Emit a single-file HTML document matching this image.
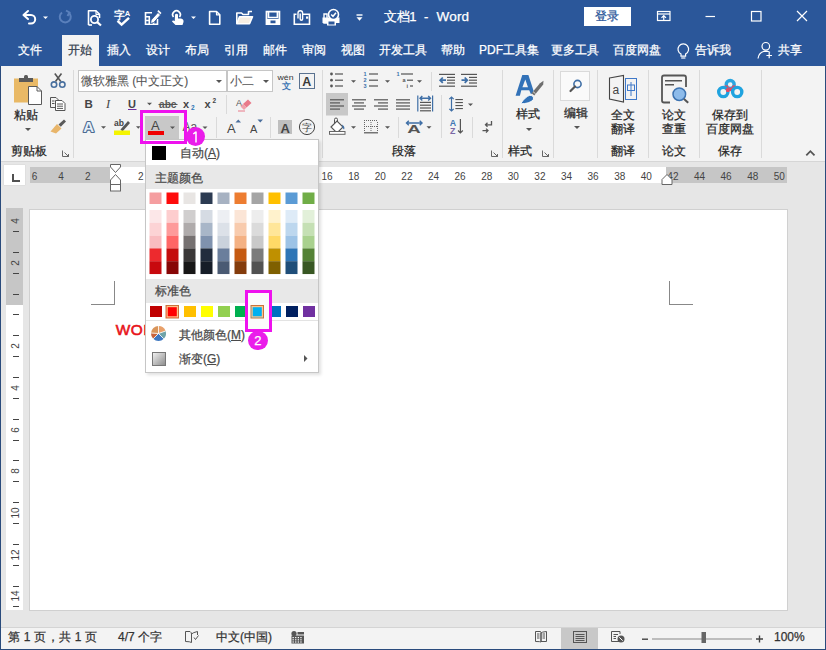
<!DOCTYPE html>
<html><head><meta charset="utf-8">
<style>
*{box-sizing:border-box}
html,body{margin:0;padding:0;width:826px;height:650px;overflow:hidden;background:#E6E6E6;font-family:"Liberation Sans",sans-serif;}
.a{position:absolute}
.t{position:absolute;white-space:nowrap;line-height:1;-webkit-text-stroke:0.25px currentColor}
#title{left:0;top:0;width:826px;height:35px;background:#2B579A}
#tabs{left:0;top:35px;width:826px;height:31px;background:#2B579A}
.tab{position:absolute;top:43px;color:#fff;font-size:12px;line-height:14px;white-space:nowrap;-webkit-text-stroke:0.25px currentColor}
#ribbon{left:0;top:66px;width:826px;height:96px;background:#F3F3F3;border-bottom:1px solid #D6D6D6}
.rt{position:absolute;color:#262626;font-size:12px;line-height:14px;white-space:nowrap;-webkit-text-stroke:0.25px currentColor}
.sep{position:absolute;width:1px;background:#DADADA}
.dd{position:absolute;width:0;height:0;border-left:3px solid transparent;border-right:3px solid transparent;border-top:3px solid #555}
</style></head><body>
<div id="title" class="a"></div>
<svg class="a" style="left:0;top:0" width="826" height="35" viewBox="0 0 826 35">
<g fill="none" stroke="#fff" stroke-width="2" stroke-linejoin="round" stroke-linecap="round">
<path d="M28 11 L23.5 15 L28 19" />
<path d="M24 15 H31 A4.2 4.2 0 0 1 31 23.4 H29" />
</g>
<path d="M43 16.5 H48 L45.5 19 Z" fill="#fff"/>
<g fill="none" stroke="#5A80BC" stroke-width="2">
<path d="M68.5 12.5 A5.5 5.5 0 1 1 62 12.5" />
<path d="M66 10.5 L69.5 12.5 L67.5 16" />
</g>
<g fill="none" stroke="#fff" stroke-width="1.6" stroke-linejoin="round">
<path d="M88.5 25 V10.8 H96 L99.5 14.3 V18" />
<path d="M96 10.8 V14.3 H99.5" stroke-width="1.2"/>
<circle cx="94.5" cy="19.5" r="3.6" stroke-width="1.8"/>
<path d="M97.2 22.2 L101 25.5" stroke-width="2.2"/>
<path d="M88.5 25 H92" />
</g>
<text x="114" y="19" fill="#fff" font-size="10.5" font-weight="bold">字</text>
<text x="124.8" y="16.3" fill="#fff" font-size="7.5" font-weight="bold" font-family="Liberation Sans">A</text>
<path d="M117.5 20.8 L121.6 24.6 L129 17.8" fill="none" stroke="#fff" stroke-width="2.4" stroke-linejoin="miter"/>
<g fill="none" stroke="#fff" stroke-width="1.6">
<path d="M152 12.8 H145.5 V24.2 H157.5 V19" />
<path d="M145.5 16.8 H150 M149.3 16.8 V24.2 M145.5 20.5 H149.3 M153.5 24.2 V22" />
</g>
<path d="M150.5 23.5 L151.2 20 L158 12.5 L160.5 15 L153.8 22.5 Z" fill="#fff" stroke="#2B579A" stroke-width="0.8"/>
<path d="M157.3 11.2 L158.5 10 L161.5 13 L160.3 14.2 Z" fill="#fff"/>
<g fill="none" stroke="#fff" stroke-width="1.7">
<path d="M173.5 17 A3.8 3.8 0 1 1 179.5 17" />
</g>
<path d="M175 14.5 Q176.5 13 178 14.5 V18.5 H181 Q184 19 183.5 22 L182.5 25 H175.5 L172 21.5 Q172.5 20 174.8 21 Z" fill="#fff"/>
<path d="M191 16.5 H196 L193.5 19 Z" fill="#fff"/>
<g fill="none" stroke="#fff" stroke-width="1.6" stroke-linejoin="round">
<path d="M209.6 11.5 H216.5 L219.8 14.8 V24.3 H209.6 Z" />
<path d="M216.5 11.5 V14.8 H219.8" stroke-width="1.2"/>
</g>
<g stroke="#fff" stroke-width="1.6" stroke-linejoin="round">
<path d="M236.8 23.8 V13 H241.5 L243 14.5 H248.5 V11.5 H252" fill="none"/>
<path d="M236.8 23.8 L239.5 16.8 H252.5 L249.5 23.8 Z" fill="#F6EEE3"/>
</g>
<g fill="none" stroke="#fff" stroke-width="1.8">
<path d="M266.5 11.6 H279.4 V24.2 H266.5 Z" />
<path d="M268.5 11.6 V17.5 H277.4 V11.6" stroke-width="1.6"/>
</g>
<path d="M266 19 H280 V25 H266 Z M270.5 20.5 V24.6 H275.5 V20.5 Z" fill="#fff" fill-rule="evenodd"/>
<g fill="none" stroke="#fff" stroke-width="1.6">
<path d="M296.5 14.3 H294.3 V24.2 H309.5 V14.3 H302.5" />
<path d="M298 18.5 V13 A2.3 2.3 0 0 1 302.6 13 V19 A1.2 1.2 0 0 1 300.2 19 V13.5" stroke-width="1.4"/>
</g>
<rect x="306" y="16.5" width="2.2" height="2.2" fill="#fff"/>
<g>
<path d="M324 14 H327 V23 H324 Z" fill="none" stroke="#fff" stroke-width="1.4"/>
<path d="M322.5 17.5 H339.5 V23 H336 V25.5 H327 V23 H322.5 Z" fill="#fff"/>
<rect x="328.5" y="21.5" width="6" height="3" fill="#2B579A"/>
<circle cx="333.5" cy="14.5" r="5" fill="#2B579A" stroke="#fff" stroke-width="1.6"/>
<path d="M331.2 14.5 L333 16.3 L336 12.8" fill="none" stroke="#fff" stroke-width="1.5"/>
</g>
<rect x="356.5" y="14.3" width="6" height="1.4" fill="#fff"/>
<path d="M356.5 17.3 H362.5 L359.5 20.8 Z" fill="#fff"/>
</svg>
<div id="tabs" class="a"></div>
<div class="t" style="left:384px;top:9px;color:#fff;font-size:13px;line-height:15px;letter-spacing:-0.4px">文档1</div>
<div class="t" style="left:424px;top:9px;color:#fff;font-size:13px;line-height:15px">-</div>
<div class="t" style="left:436.5px;top:9px;color:#fff;font-size:13.5px;line-height:15px;letter-spacing:0.2px">Word</div>
<div class="a" style="left:584px;top:7px;width:47px;height:19px;background:#fff"></div>
<div class="t" style="left:595px;top:9px;color:#2B579A;font-size:12px;line-height:14px">登录</div>
<svg class="a" style="left:640px;top:0" width="186" height="35" viewBox="640 0 186 35">
<g fill="none" stroke="#fff" stroke-width="1.2">
<rect x="657.5" y="11.5" width="12.5" height="9"/>
<path d="M657.5 14 H670"/>
<path d="M663.75 20.5 V15.5 M661.5 17.8 L663.75 15.5 L666 17.8"/>
<path d="M705.5 16.5 H715"/>
<rect x="751.5" y="11.5" width="9.5" height="9.5"/>
<path d="M797 11 L807 21 M807 11 L797 21"/>
</g>
</svg>
<div class="tab" style="left:18px">文件</div>
<div class="a" style="left:62px;top:35px;width:37px;height:31px;background:#F3F3F3"></div>
<div class="tab" style="left:68px;color:#34404F">开始</div>
<div class="tab" style="left:107px">插入</div>
<div class="tab" style="left:146px">设计</div>
<div class="tab" style="left:185px">布局</div>
<div class="tab" style="left:224px">引用</div>
<div class="tab" style="left:263px">邮件</div>
<div class="tab" style="left:302px">审阅</div>
<div class="tab" style="left:341px">视图</div>
<div class="tab" style="left:379px">开发工具</div>
<div class="tab" style="left:441px">帮助</div>
<div class="tab" style="left:479px">PDF工具集</div>
<div class="tab" style="left:551px">更多工具</div>
<div class="tab" style="left:613px">百度网盘</div>
<div class="tab" style="left:695px">告诉我</div>
<div class="tab" style="left:778px">共享</div>
<svg class="a" style="left:670px;top:35px" width="140" height="31" viewBox="670 35 140 31">
<g fill="none" stroke="#fff" stroke-width="1.2">
<path d="M681 54 A5.3 5.3 0 1 1 685.6 54 V56.2 H681 Z" />
<path d="M681.2 58 H685.4"/>
<circle cx="765.8" cy="46.3" r="3.8"/>
<path d="M758 58.5 Q759 51.5 765.8 51.2 Q768.5 51.3 770 52.5"/>
<path d="M769.2 52.8 V58.3 M766.4 55.5 H772"/>
</g>
</svg>
<div id="ribbon" class="a"></div>
<div class="sep" style="left:73px;top:70px;height:88px"></div>
<div class="sep" style="left:322px;top:70px;height:88px"></div>
<div class="sep" style="left:502px;top:70px;height:88px"></div>
<div class="sep" style="left:553px;top:70px;height:88px"></div>
<div class="sep" style="left:597px;top:70px;height:88px"></div>
<div class="sep" style="left:648px;top:70px;height:88px"></div>
<div class="sep" style="left:699px;top:70px;height:88px"></div>
<div class="sep" style="left:761px;top:70px;height:88px"></div>
<div class="sep" style="left:431px;top:72px;height:19px"></div>
<div class="sep" style="left:441px;top:95px;height:43px"></div>
<div class="sep" style="left:398px;top:117px;height:21px"></div>
<div class="sep" style="left:472px;top:117px;height:21px"></div>
<div class="sep" style="left:226px;top:95px;height:19px"></div>
<div class="sep" style="left:216px;top:117px;height:21px"></div>
<div class="sep" style="left:270px;top:117px;height:21px"></div>
<div class="a" style="left:78px;top:70px;width:149px;height:22px;background:#fff;border:1px solid #C6C6C6"></div>
<div class="a" style="left:227px;top:70px;width:46px;height:22px;background:#fff;border:1px solid #C6C6C6"></div>
<div class="rt" style="left:81px;top:74px;color:#555;-webkit-text-stroke:0.1px #555">微软雅黑 (中文正文)</div>
<div class="rt" style="left:230px;top:74px;color:#555;-webkit-text-stroke:0.1px #555">小二</div>
<div class="dd" style="left:216px;top:80px"></div>
<div class="dd" style="left:263px;top:80px"></div>
<div class="rt" style="left:14px;top:108px">粘贴</div>
<div class="dd" style="left:25px;top:128px"></div>
<div class="rt" style="left:11px;top:144px">剪贴板</div>
<div class="rt" style="left:392px;top:144px">段落</div>
<div class="rt" style="left:508px;top:144px">样式</div>
<div class="rt" style="left:516px;top:107px">样式</div>
<div class="dd" style="left:526px;top:128px"></div>
<div class="rt" style="left:564px;top:106px">编辑</div>
<div class="dd" style="left:574px;top:126px"></div>
<div class="rt" style="left:611px;top:108px">全文</div>
<div class="rt" style="left:611px;top:122px">翻译</div>
<div class="rt" style="left:611px;top:144px">翻译</div>
<div class="rt" style="left:662px;top:108px">论文</div>
<div class="rt" style="left:662px;top:122px">查重</div>
<div class="rt" style="left:662px;top:144px">论文</div>
<div class="rt" style="left:712px;top:108px">保存到</div>
<div class="rt" style="left:706px;top:122px">百度网盘</div>
<div class="rt" style="left:718px;top:144px">保存</div>

<svg class="a" style="left:0;top:66px" width="826" height="95" viewBox="0 66 826 95">
<!-- paste -->
<rect x="14" y="78.5" width="24" height="24" fill="#E9B966"/>
<rect x="19" y="78" width="14" height="4" fill="#5A5A5A"/>
<rect x="24" y="75" width="4" height="4" rx="1.5" fill="#5A5A5A"/>
<path d="M28.5 86.5 H37 L41.5 91 V104.5 H28.5 Z" fill="#fff" stroke="#5A5A5A" stroke-width="1"/>
<path d="M37 86.5 V91 H41.5" fill="none" stroke="#5A5A5A" stroke-width="1"/>
<!-- scissors -->
<g fill="none" stroke-width="1.6">
<path d="M55.5 81.5 L61.5 73.5 M60.8 81.5 L54.8 73.5" stroke="#555"/>
<circle cx="54" cy="84.6" r="2.7" stroke="#49709F"/>
<circle cx="62.3" cy="84.6" r="2.7" stroke="#49709F"/>
</g>
<!-- copy -->
<g fill="#F3F3F3" stroke="#555" stroke-width="1">
<path d="M50.5 97.5 H56 L58.5 100 V107.5 H50.5 Z"/>
<path d="M55.5 100.5 H62 L65 103.5 V110.5 H55.5 Z" fill="#fff"/>
<path d="M52 101 H54.5 M52 103.5 H54.5 M57 104 H63 M57 106.2 H63 M57 108.4 H63" fill="none"/>
</g>
<!-- format painter -->
<path d="M58.5 124.5 L64 119.5 L66 121.5 L60.8 126.8 Z" fill="#5A5A5A"/>
<path d="M57 124 L61.5 128.5 L56 133.5 L50.5 131.5 Z" fill="#E8B56A"/>
<!-- B I U -->
<text x="84.5" y="107.6" font-family="Liberation Sans" font-weight="bold" font-size="11.5" fill="#444">B</text>
<text x="106" y="107.6" font-family="Liberation Serif" font-style="italic" font-size="12.5" fill="#444">I</text>
<text x="128" y="107.6" font-family="Liberation Sans" font-weight="bold" font-size="11" fill="#444">U</text>
<rect x="128" y="109" width="8.5" height="1" fill="#7030A0"/>
<path d="M147 102.8 H152 L149.5 105.3 Z" fill="#555"/>
<text x="159" y="107.6" font-family="Liberation Sans" font-weight="bold" font-size="10" fill="#5A5A5A" textLength="17.5" lengthAdjust="spacingAndGlyphs">abc</text>
<rect x="158.5" y="104" width="19" height="1" fill="#555"/>
<text x="183" y="107.6" font-family="Liberation Sans" font-weight="bold" font-size="11" fill="#444">x</text>
<text x="191" y="110" font-family="Liberation Sans" font-weight="bold" font-size="6.5" fill="#2E75B6">2</text>
<text x="204.5" y="107.6" font-family="Liberation Sans" font-weight="bold" font-size="11" fill="#444">x</text>
<text x="212.5" y="102.5" font-family="Liberation Sans" font-weight="bold" font-size="6.5" fill="#444">2</text>
<!-- eraser -->
<text x="236" y="106" font-family="Liberation Sans" font-size="9" fill="#555">A</text>
<path d="M243 104 L248 99.5 L251.5 103 L246.5 107.5 Z" fill="#E97A8A"/>
<path d="M240.5 106.5 L243 104 L246.5 107.5 L244 110 Z" fill="#F0A0AA"/>
<path d="M238 111 H245" stroke="#E97A8A" stroke-width="1"/>
<!-- wen -->
<text x="277.5" y="79.8" font-family="Liberation Sans" font-size="8" fill="#333" textLength="16" lengthAdjust="spacingAndGlyphs">wén</text>
<text x="281.5" y="88.8" font-size="8.5" font-weight="bold" fill="#3F78B5">文</text>
<rect x="299.5" y="73.5" width="15" height="15" fill="none" stroke="#5A7290" stroke-width="1"/>
<text x="302.3" y="86.3" font-family="Liberation Sans" font-weight="bold" font-size="12.5" fill="#3A3A3A">A</text>
<!-- text effect A -->
<text x="83.3" y="132.3" font-family="Liberation Sans" font-weight="bold" font-size="15" fill="#E6F0FA" stroke="#4C6A90" stroke-width="2.2" paint-order="stroke" stroke-linejoin="round">A</text>
<path d="M101 126.3 H106 L103.5 128.8 Z" fill="#555"/>
<!-- highlighter -->
<text x="114" y="125.8" font-family="Liberation Sans" font-weight="bold" font-size="8.5" fill="#444">ab</text>
<path d="M120.5 129.5 L128 121 L130 123 L122.5 131.5 Z" fill="#555"/>
<rect x="114" y="130.5" width="16" height="4.5" fill="#F4F400"/>
<path d="M136 126.3 H140.5 L138.3 128.8 Z" fill="#555"/>
<!-- font color -->
<rect x="145" y="116" width="34" height="23.5" fill="#C8C8C8"/>
<text x="151" y="129.5" font-family="Liberation Sans" font-size="13" fill="#444">A</text>
<rect x="148" y="131" width="16" height="4" fill="#F00000"/>
<path d="M170 126.5 H175 L172.5 129 Z" fill="#555"/>
<!-- Aa -->
<text x="182.5" y="131" font-family="Liberation Sans" font-size="12" fill="#555">Aa</text>
<path d="M202.5 126.5 H207.5 L205 129 Z" fill="#555"/>
<!-- grow/shrink -->
<text x="227" y="133" font-family="Liberation Sans" font-size="13" fill="#444">A</text>
<path d="M235.5 122.5 H241 L238.3 119.5 Z" fill="#4A6E9C"/>
<text x="250" y="133" font-family="Liberation Sans" font-size="11" fill="#444">A</text>
<path d="M257.5 119.5 H263 L260.3 122.5 Z" fill="#4A6E9C"/>
<!-- shaded A -->
<rect x="278" y="120" width="14" height="14" fill="#BFBFBF"/>
<text x="280.5" y="132.5" font-family="Liberation Sans" font-weight="bold" font-size="13" fill="#444">A</text>
<circle cx="307" cy="127" r="7.6" fill="none" stroke="#444" stroke-width="1"/>
<text x="302" y="131.3" font-size="9.5" fill="#444">字</text>
</svg>
<svg class="a" style="left:0;top:66px" width="826" height="95" viewBox="0 66 826 95">
<!-- bullets -->
<g fill="#555">
<circle cx="331.5" cy="74" r="1.4"/><circle cx="331.5" cy="80.2" r="1.4"/><circle cx="331.5" cy="86" r="1.4"/>
<rect x="335" y="73.4" width="8" height="1.2"/><rect x="335" y="79.6" width="8" height="1.2"/><rect x="335" y="85.4" width="8" height="1.2"/>
<path d="M351 80.3 H356 L353.5 82.8 Z"/>
<rect x="369" y="73.4" width="9" height="1.2"/><rect x="369" y="79.6" width="9" height="1.2"/><rect x="369" y="85.4" width="9" height="1.2"/>
<path d="M385 80.3 H390 L387.5 82.8 Z"/>
<rect x="401" y="73.4" width="12" height="1.2"/><rect x="407" y="79.6" width="6" height="1.2"/><rect x="410" y="85.4" width="3" height="1.2"/>
<path d="M417 80.3 H422 L419.5 82.8 Z"/>
</g>
<g font-family="Liberation Sans" font-weight="bold" font-size="5.5" fill="#3C70AA">
<text x="363.5" y="76.2">1</text><text x="363.5" y="82.4">2</text><text x="363.5" y="88.2">3</text>
<text x="396.5" y="76.2">1</text><text x="402.5" y="82.4" fill="#555">a</text><text x="406.5" y="88.2" fill="#555">i</text>
</g>
<!-- indents -->
<g fill="#555">
<rect x="439" y="73.8" width="16" height="1.2"/><rect x="447" y="76.8" width="8" height="1.2"/><rect x="447" y="79.6" width="8" height="1.2"/><rect x="447" y="82.4" width="8" height="1.2"/><rect x="439" y="85.6" width="16" height="1.2"/>
<rect x="461" y="73.8" width="16" height="1.2"/><rect x="469" y="76.8" width="8" height="1.2"/><rect x="469" y="79.6" width="8" height="1.2"/><rect x="469" y="82.4" width="8" height="1.2"/><rect x="461" y="85.6" width="16" height="1.2"/>
</g>
<g fill="none" stroke="#3F6FA6" stroke-width="1.8">
<path d="M440 80.2 H446 M442.8 77.5 L440.2 80.2 L442.8 82.9"/>
<path d="M461.5 80.2 H467.5 M464.7 77.5 L467.3 80.2 L464.7 82.9"/>
</g>
<!-- align -->
<rect x="326" y="93" width="22" height="22.5" fill="#C8C8C8"/>
<g fill="#555">
<rect x="330" y="99.2" width="14" height="1.2"/><rect x="330" y="102.3" width="10" height="1.2"/><rect x="330" y="105.4" width="14" height="1.2"/><rect x="330" y="108.5" width="10" height="1.2"/>
<rect x="352" y="99.2" width="14" height="1.2"/><rect x="354" y="102.3" width="10" height="1.2"/><rect x="352" y="105.4" width="14" height="1.2"/><rect x="354" y="108.5" width="10" height="1.2"/>
<rect x="374" y="99.2" width="14" height="1.2"/><rect x="378" y="102.3" width="10" height="1.2"/><rect x="374" y="105.4" width="14" height="1.2"/><rect x="378" y="108.5" width="10" height="1.2"/>
<rect x="396" y="99.2" width="14" height="1.2"/><rect x="396" y="102.3" width="14" height="1.2"/><rect x="396" y="105.4" width="14" height="1.2"/><rect x="396" y="108.5" width="14" height="1.2"/>
<rect x="420" y="101.8" width="11" height="1.2"/><rect x="420" y="104.6" width="11" height="1.2"/><rect x="420" y="107.4" width="11" height="1.2"/><rect x="420" y="110.2" width="11" height="1.2"/>
</g>
<g fill="none" stroke="#3F6FA6" stroke-width="1.2">
<path d="M417.8 95.5 V111.5 M432.6 95.5 V111.5"/>
<path d="M420 98.3 H430.5 M422.3 96 L420 98.3 L422.3 100.6 M428.2 96 L430.5 98.3 L428.2 100.6" stroke-width="1.4"/>
</g>
<!-- line spacing -->
<g fill="#555">
<rect x="455.4" y="99" width="7.5" height="1.1"/><rect x="455.4" y="102" width="7.5" height="1.1"/><rect x="455.4" y="105" width="7.5" height="1.1"/><rect x="455.4" y="108" width="7.5" height="1.1"/>
<path d="M468 103.4 H473 L470.5 105.9 Z"/>
</g>
<g fill="none" stroke="#3F6FA6" stroke-width="1.2">
<path d="M451.5 97 V111 M449.3 99.2 L451.5 97 L453.7 99.2 M449.3 108.8 L451.5 111 L453.7 108.8"/>
</g>
<!-- sort -->
<text x="449.8" y="125.6" font-family="Liberation Sans" font-weight="bold" font-size="8.8" fill="#3F78B5">A</text>
<text x="450" y="133.8" font-family="Liberation Sans" font-weight="bold" font-size="8.8" fill="#7A68A6">Z</text>
<path d="M460.4 119 V133 M458 130.5 L460.4 133 L462.8 130.5" fill="none" stroke="#555" stroke-width="1.2"/>
<!-- show marks -->
<g fill="none" stroke="#555" stroke-width="1.3">
<path d="M491.5 121 V124.8 H485.5 M487.5 122.8 L485.5 124.8 L487.5 126.8"/>
<path d="M482.5 130.6 H488 M486 128.6 L488 130.6 L486 132.6"/>
</g>
<!-- shading -->
<g>
<path d="M331 127 L337 121 L343 127 L337 133 Z" fill="#fff" stroke="#555" stroke-width="1.1"/>
<path d="M334.5 123.5 V119.5 A1.5 1.5 0 0 1 337.5 119.5 V122" fill="none" stroke="#555" stroke-width="1"/>
<path d="M342 124.5 Q345.5 127 344 129.5 Q342 128 342 124.5 Z" fill="#3F6FA6"/>
<rect x="329.5" y="131.5" width="15.5" height="2.8" fill="#fff" stroke="#666" stroke-width="1"/>
<path d="M351 126.3 H356 L353.5 128.8 Z" fill="#555"/>
</g>
<!-- borders -->
<g fill="#666"><rect x="364" y="120" width="1" height="1"/><rect x="366" y="120" width="1" height="1"/><rect x="368" y="120" width="1" height="1"/><rect x="370" y="120" width="1" height="1"/><rect x="372" y="120" width="1" height="1"/><rect x="374" y="120" width="1" height="1"/><rect x="376" y="120" width="1" height="1"/><rect x="364" y="126" width="1" height="1"/><rect x="366" y="126" width="1" height="1"/><rect x="368" y="126" width="1" height="1"/><rect x="370" y="126" width="1" height="1"/><rect x="372" y="126" width="1" height="1"/><rect x="374" y="126" width="1" height="1"/><rect x="376" y="126" width="1" height="1"/><rect x="364" y="122" width="1" height="1"/><rect x="364" y="124" width="1" height="1"/><rect x="364" y="126" width="1" height="1"/><rect x="364" y="128" width="1" height="1"/><rect x="364" y="130" width="1" height="1"/><rect x="370.5" y="122" width="1" height="1"/><rect x="370.5" y="124" width="1" height="1"/><rect x="370.5" y="126" width="1" height="1"/><rect x="370.5" y="128" width="1" height="1"/><rect x="370.5" y="130" width="1" height="1"/><rect x="377" y="122" width="1" height="1"/><rect x="377" y="124" width="1" height="1"/><rect x="377" y="126" width="1" height="1"/><rect x="377" y="128" width="1" height="1"/><rect x="377" y="130" width="1" height="1"/></g>
<rect x="364" y="132.2" width="14" height="1.2" fill="#555"/>
<path d="M385 126.3 H390 L387.5 128.8 Z" fill="#555"/>
<!-- char scale -->
<g fill="none" stroke="#3F6FA6" stroke-width="1.4">
<path d="M406.5 123 H422 M408.8 120.8 L406.5 123 L408.8 125.2 M419.7 120.8 L422 123 L419.7 125.2"/>
</g>
<text x="407.3" y="133.2" font-family="Liberation Sans" font-weight="bold" font-size="10" fill="#555" textLength="13.5" lengthAdjust="spacingAndGlyphs">A</text>
<path d="M426.5 126.3 H431.5 L429 128.8 Z" fill="#555"/>
<!-- styles -->
<path d="M522.3 75 H528.4 L533.8 91.5 L531 94.2 L529.2 90.2 H521.3 L519.9 95.8 H515.6 Z M525.3 79.6 L522.4 87.2 H528 Z" fill="#3272B8" fill-rule="evenodd"/>
<path d="M531.5 93.3 L540 83.2 L543.5 80.8 L543.2 84.5 L534.3 95.5 Z" fill="#6E6E6E"/>
<path d="M533 91.6 L535.6 93.8" stroke="#F3F3F3" stroke-width="0.8"/>
<path d="M520.5 103.8 Q525.5 96.5 529.8 95.3 Q534.5 95.5 533.3 99.8 Q529.5 103.8 520.5 103.8 Z" fill="#3272B8" stroke="#fff" stroke-width="0.9"/>
<!-- launchers -->
<g fill="none" stroke="#666" stroke-width="1">
<path d="M62.5 150.5 V156.5 H68.5 M64.5 152.5 L68.5 156.5 M66 156.5 H68.5 V154"/>
<path d="M491.5 150.5 V156.5 H497.5 M493.5 152.5 L497.5 156.5 M495 156.5 H497.5 V154"/>
<path d="M542.5 150.5 V156.5 H548.5 M544.5 152.5 L548.5 156.5 M546 156.5 H548.5 V154"/>
</g>
<!-- editing -->
<rect x="560.5" y="71.5" width="29" height="29" fill="#FAFAFA" stroke="#DADADA" stroke-width="1"/>
<circle cx="577.5" cy="84" r="3.6" fill="none" stroke="#3F6FA6" stroke-width="1.6"/>
<path d="M575 86.5 L570.5 91" stroke="#555" stroke-width="2.2" stroke-linecap="round"/>
<!-- translate -->
<path d="M609.5 78 L623.5 75.5 V102 L609.5 99 Z" fill="none" stroke="#444" stroke-width="1.1"/>
<text x="612.5" y="94" font-family="Liberation Sans" font-size="12" fill="#444">a</text>
<rect x="625.5" y="78.5" width="11" height="21" fill="none" stroke="#3F78C8" stroke-width="1"/>
<rect x="627.5" y="85" width="7" height="5.5" fill="none" stroke="#3F78C8" stroke-width="1"/>
<path d="M631 82 V96" stroke="#3F78C8" stroke-width="1"/>
<!-- paper check -->
<path d="M670 102.5 H664 Q662 102.5 662 100.5 V77.5 Q662 75.5 664 75.5 H684 Q686 75.5 686 77.5 V87" fill="none" stroke="#555" stroke-width="1.8"/>
<rect x="665" y="80" width="17" height="1.5" fill="#555"/><rect x="665" y="84" width="9" height="1.5" fill="#555"/>
<circle cx="679.3" cy="94.2" r="6.3" fill="#8DBBEA" stroke="#3C72B0" stroke-width="1.5"/>
<path d="M684 99 L688.2 102.8" stroke="#555" stroke-width="2"/>
<!-- baidu -->
<g fill="none" stroke-width="3.4">
<circle cx="730.2" cy="84.5" r="4" stroke="#2AA6E0"/>
<path d="M726.2 85.5 A4 4 0 0 0 734.2 85.5" stroke="#E8475F"/>
<circle cx="723.3" cy="92" r="4.6" stroke="#1FA3DF"/>
<circle cx="737.2" cy="92" r="4.6" stroke="#1FA3DF"/>
<path d="M726.5 88.5 A4.6 4.6 0 0 1 727.9 92" stroke="#E8475F" stroke-width="3"/>
</g>
<!-- collapse -->
<path d="M806.3 155.3 L810.4 151.2 L814.5 155.3" fill="none" stroke="#555" stroke-width="1.8"/>
</svg>
<style>
.rn{top:171px;width:30px;text-align:center;font-size:10px;line-height:11px;color:#444;-webkit-text-stroke:0}
.vn{position:absolute;left:6px;width:30px;height:30px;font-size:10px;line-height:30px;text-align:center;color:#444;transform:rotate(-90deg);transform-origin:15px 15px;left:1px}
</style>
<!-- ruler -->
<div class="a" style="left:4px;top:165px;width:21px;height:20px;background:#fff;box-shadow:0 0 1px #BBB"></div>
<svg class="a" style="left:4px;top:165px" width="21" height="20"><path d="M9 9 V16 H16" fill="none" stroke="#505050" stroke-width="2"/></svg>
<div class="a" style="left:30px;top:167px;width:757px;height:16px;background:#fff"></div>
<div class="a" style="left:30px;top:167px;width:80px;height:16px;background:#C6C6C6"></div>
<div class="a" style="left:666px;top:167px;width:121px;height:16px;background:#C6C6C6"></div>
<div class="t rn" style="left:19.5px">6</div>
<div class="t rn" style="left:46.1px">4</div>
<div class="t rn" style="left:72.7px">2</div>
<div class="t rn" style="left:125.9px">2</div>
<div class="t rn" style="left:152.5px">4</div>
<div class="t rn" style="left:179.1px">6</div>
<div class="t rn" style="left:205.7px">8</div>
<div class="t rn" style="left:232.3px">10</div>
<div class="t rn" style="left:258.9px">12</div>
<div class="t rn" style="left:285.5px">14</div>
<div class="t rn" style="left:312.1px">16</div>
<div class="t rn" style="left:338.7px">18</div>
<div class="t rn" style="left:365.3px">20</div>
<div class="t rn" style="left:391.9px">22</div>
<div class="t rn" style="left:418.5px">24</div>
<div class="t rn" style="left:445.1px">26</div>
<div class="t rn" style="left:471.7px">28</div>
<div class="t rn" style="left:498.3px">30</div>
<div class="t rn" style="left:524.9px">32</div>
<div class="t rn" style="left:551.5px">34</div>
<div class="t rn" style="left:578.1px">36</div>
<div class="t rn" style="left:604.7px">38</div>
<div class="t rn" style="left:631.3px">40</div>
<div class="t rn" style="left:657.9px">42</div>
<div class="t rn" style="left:684.5px">44</div>
<div class="t rn" style="left:711.1px">46</div>
<div class="t rn" style="left:737.7px">48</div>
<div class="t rn" style="left:764.3px">50</div>
<svg class="a" style="left:100px;top:160px" width="30" height="35">
<path d="M10.5 4.5 H20.5 V7 L15.5 12.5 L10.5 7 Z" fill="#fff" stroke="#666" stroke-width="1"/>
<path d="M15.5 14.5 L20.5 20 V24.5 H10.5 V20 Z" fill="#fff" stroke="#666" stroke-width="1"/>
<rect x="10.5" y="24.5" width="10" height="6.5" fill="#fff" stroke="#666" stroke-width="1"/>
</svg>
<svg class="a" style="left:650px;top:170px" width="30" height="20">
<path d="M12 9.5 L17 4.5 L22 9.5 V14.5 H12 Z" fill="#fff" stroke="#666" stroke-width="1"/>
</svg>
<!-- vertical ruler -->
<div class="a" style="left:6px;top:208px;width:17px;height:402px;background:#fff"></div>
<div class="a" style="left:6px;top:208px;width:17px;height:97px;background:#C6C6C6"></div>
<div class="vn" style="top:206.1px">4</div>
<div class="vn" style="top:247.8px">2</div>
<div class="vn" style="top:331.2px">2</div>
<div class="vn" style="top:372.9px">4</div>
<div class="vn" style="top:414.6px">6</div>
<div class="vn" style="top:456.3px">8</div>
<div class="vn" style="top:498.0px">10</div>
<div class="vn" style="top:539.7px">12</div>
<div class="vn" style="top:581.4px">14</div>
<div class="a" style="left:13px;top:231.0px;width:6px;height:1px;background:#444"></div>
<div class="a" style="left:13px;top:251.9px;width:6px;height:1px;background:#444"></div>
<div class="a" style="left:13px;top:272.7px;width:6px;height:1px;background:#444"></div>
<div class="a" style="left:13px;top:293.6px;width:6px;height:1px;background:#444"></div>
<div class="a" style="left:13px;top:314.4px;width:6px;height:1px;background:#444"></div>
<div class="a" style="left:13px;top:335.3px;width:6px;height:1px;background:#444"></div>
<div class="a" style="left:13px;top:356.1px;width:6px;height:1px;background:#444"></div>
<div class="a" style="left:13px;top:377.0px;width:6px;height:1px;background:#444"></div>
<div class="a" style="left:13px;top:397.8px;width:6px;height:1px;background:#444"></div>
<div class="a" style="left:13px;top:418.7px;width:6px;height:1px;background:#444"></div>
<div class="a" style="left:13px;top:439.5px;width:6px;height:1px;background:#444"></div>
<div class="a" style="left:13px;top:460.4px;width:6px;height:1px;background:#444"></div>
<div class="a" style="left:13px;top:481.2px;width:6px;height:1px;background:#444"></div>
<div class="a" style="left:13px;top:502.1px;width:6px;height:1px;background:#444"></div>
<div class="a" style="left:13px;top:522.9px;width:6px;height:1px;background:#444"></div>
<div class="a" style="left:13px;top:543.8px;width:6px;height:1px;background:#444"></div>
<div class="a" style="left:13px;top:564.6px;width:6px;height:1px;background:#444"></div>
<div class="a" style="left:13px;top:585.5px;width:6px;height:1px;background:#444"></div>
<div class="a" style="left:13px;top:606.3px;width:6px;height:1px;background:#444"></div>
<!-- page -->
<div class="a" style="left:30px;top:210px;width:757px;height:400px;background:#fff;box-shadow:0 0 0 1px #D0D0D0"></div>
<div class="a" style="left:114px;top:281px;width:1px;height:24px;background:#888"></div>
<div class="a" style="left:91px;top:304px;width:24px;height:1px;background:#888"></div>
<div class="a" style="left:669px;top:281px;width:1px;height:24px;background:#888"></div>
<div class="a" style="left:669px;top:304px;width:24px;height:1px;background:#888"></div>
<div class="t" style="left:115.8px;top:320.5px;font-size:15.4px;line-height:18px;letter-spacing:0.5px;color:#E8141B;-webkit-text-stroke:0.6px #E8141B">WORD</div>
<!-- status bar -->
<div class="a" style="left:0;top:627px;width:826px;height:23px;background:#F3F3F3;border-top:1px solid #D4D4D4"></div>
<div class="t" style="left:8px;top:630px;font-size:12px;line-height:14px;color:#333;letter-spacing:0.25px">第 1 页，共 1 页</div>
<div class="t" style="left:118px;top:630px;font-size:12px;line-height:14px;color:#333">4/7 个字</div>
<div class="t" style="left:216px;top:630px;font-size:12px;line-height:14px;color:#333">中文(中国)</div>
<div class="a" style="left:561px;top:628px;width:37px;height:22px;background:#C8C8C8"></div>
<svg class="a" style="left:0;top:620px" width="826" height="30" viewBox="0 620 826 30">
<g fill="none" stroke="#555" stroke-width="1">
<path d="M185.5 631.5 H190 Q191.5 632.5 191.5 634 V642.5 Q190 641.5 185.5 641.5 Z M191.5 634 Q193 632.5 197.5 631.5 V635"/>
<path d="M194 637.5 L195.5 639.5 L198.5 635.5"/>

<path d="M535.5 631.5 H540.5 Q541 632 541 633 V642 Q540.5 641.5 535.5 641.5 Z M541 633 Q541.5 632 546.5 631.5 V641.5 H541 Z"/>
<path d="M537 634 H539.5 M537 636 H539.5 M537 638 H539.5 M542.5 634 H545 M542.5 636 H545 M542.5 638 H545"/>
<rect x="573.5" y="631.5" width="13" height="11"/>
<path d="M575.5 634.5 H584.5 M575.5 636.5 H584.5 M575.5 638.5 H584.5 M575.5 640.5 H584.5"/>
<path d="M619 641.5 H611.5 V631.5 H620 V634"/>
<path d="M613.5 634.5 H618 M613.5 636.5 H616 M613.5 638.5 H616"/>
</g>
<rect x="291.5" y="635.5" width="12.5" height="8" fill="#555"/><circle cx="294" cy="633.5" r="2.6" fill="#555"/><rect x="297.5" y="632" width="6.5" height="2.5" fill="#555"/><rect x="292.5" y="637.0" width="1.3" height="1.2" fill="#fff"/><rect x="292.5" y="639.2" width="1.3" height="1.2" fill="#fff"/><rect x="292.5" y="641.4" width="1.3" height="1.2" fill="#fff"/><rect x="295.1" y="637.0" width="1.3" height="1.2" fill="#fff"/><rect x="295.1" y="639.2" width="1.3" height="1.2" fill="#fff"/><rect x="295.1" y="641.4" width="1.3" height="1.2" fill="#fff"/><rect x="297.7" y="637.0" width="1.3" height="1.2" fill="#fff"/><rect x="297.7" y="639.2" width="1.3" height="1.2" fill="#fff"/><rect x="297.7" y="641.4" width="1.3" height="1.2" fill="#fff"/><rect x="300.3" y="637.0" width="1.3" height="1.2" fill="#fff"/><rect x="300.3" y="639.2" width="1.3" height="1.2" fill="#fff"/><rect x="300.3" y="641.4" width="1.3" height="1.2" fill="#fff"/>
<circle cx="621" cy="639" r="3.5" fill="#555"/>
<path d="M619.3 637.3 L622.7 640.7" stroke="#fff" stroke-width="1"/>
<rect x="642" y="638.5" width="6" height="1.4" fill="#444"/>
<rect x="652" y="638.5" width="100" height="1" fill="#888"/>
<rect x="701.5" y="632" width="4.5" height="11" fill="#666"/>
<path d="M756 639 H763 M759.5 635.5 V642.5" stroke="#444" stroke-width="1.4"/>
</svg>
<div class="t" style="left:774px;top:630px;font-size:12px;line-height:14px;color:#333">100%</div>
<!-- popup -->
<div class="a" style="left:145px;top:139px;width:174px;height:234px;background:#fff;border:1px solid #C6C6C6;box-shadow:2px 2px 3px rgba(0,0,0,0.12)"></div>
<div class="a" style="left:146px;top:165px;width:172px;height:24px;background:#E8E8E8"></div>
<div class="a" style="left:146px;top:279px;width:172px;height:24px;background:#E8E8E8"></div>
<div class="a" style="left:146px;top:320px;width:172px;height:1px;background:#E3E3E3"></div>
<div class="a" style="left:152px;top:146px;width:14px;height:14px;background:#000"></div>
<div class="t" style="left:180px;top:145.5px;font-size:12px;line-height:14px;color:#4A4A4A">自动(<u>A</u>)</div>
<div class="t" style="left:155px;top:170.5px;font-size:12px;line-height:14px;color:#4A4A4A">主题颜色</div>
<div class="t" style="left:155px;top:284px;font-size:12px;line-height:14px;color:#4A4A4A">标准色</div>
<div class="t" style="left:179px;top:328px;font-size:12px;line-height:14px;color:#4A4A4A">其他颜色(<u>M</u>)</div>
<div class="t" style="left:179px;top:352px;font-size:12px;line-height:14px;color:#4A4A4A">渐变(<u>G</u>)</div>
<svg class="a" style="left:140px;top:135px" width="200" height="250" viewBox="140 135 200 250">
<rect x="149.5" y="192.5" width="12" height="11.5" fill="#F59EA0"/>
<rect x="149.5" y="210" width="12" height="12.85" fill="#FCE7E8"/>
<rect x="149.5" y="222.8" width="12" height="12.85" fill="#FCD3D5"/>
<rect x="149.5" y="235.6" width="12" height="12.85" fill="#F9BCC0"/>
<rect x="149.5" y="248.4" width="12" height="12.85" fill="#ED2A2E"/>
<rect x="149.5" y="261.2" width="12" height="12.85" fill="#C8090E"/>
<rect x="150" y="306" width="12" height="11" fill="#C00000"/>
<rect x="166.5" y="192.5" width="12" height="11.5" fill="#FE0B0B"/>
<rect x="166.5" y="210" width="12" height="12.85" fill="#FDCDCE"/>
<rect x="166.5" y="222.8" width="12" height="12.85" fill="#FE9A9A"/>
<rect x="166.5" y="235.6" width="12" height="12.85" fill="#FF6666"/>
<rect x="166.5" y="248.4" width="12" height="12.85" fill="#C40C0C"/>
<rect x="166.5" y="261.2" width="12" height="12.85" fill="#870606"/>
<rect x="166.0" y="305.5" width="12.5" height="12.5" fill="#FF0000" stroke="#C8743C" stroke-width="1"/>
<rect x="167.1" y="306.6" width="10.3" height="10.3" fill="none" stroke="#FFC48A" stroke-width="1.2"/>
<rect x="183.5" y="192.5" width="12" height="11.5" fill="#E8E5E3"/>
<rect x="183.5" y="210" width="12" height="12.85" fill="#D0CECE"/>
<rect x="183.5" y="222.8" width="12" height="12.85" fill="#AFABAB"/>
<rect x="183.5" y="235.6" width="12" height="12.85" fill="#767171"/>
<rect x="183.5" y="248.4" width="12" height="12.85" fill="#3B3838"/>
<rect x="183.5" y="261.2" width="12" height="12.85" fill="#181717"/>
<rect x="184" y="306" width="12" height="11" fill="#FFC000"/>
<rect x="200.5" y="192.5" width="12" height="11.5" fill="#2C3B52"/>
<rect x="200.5" y="210" width="12" height="12.85" fill="#D5DBE3"/>
<rect x="200.5" y="222.8" width="12" height="12.85" fill="#A8B6C8"/>
<rect x="200.5" y="235.6" width="12" height="12.85" fill="#7F92AE"/>
<rect x="200.5" y="248.4" width="12" height="12.85" fill="#212C3D"/>
<rect x="200.5" y="261.2" width="12" height="12.85" fill="#161D28"/>
<rect x="201" y="306" width="12" height="11" fill="#FFFF00"/>
<rect x="217.5" y="192.5" width="12" height="11.5" fill="#A7B2C2"/>
<rect x="217.5" y="210" width="12" height="12.85" fill="#EDEFF3"/>
<rect x="217.5" y="222.8" width="12" height="12.85" fill="#DCE1E8"/>
<rect x="217.5" y="235.6" width="12" height="12.85" fill="#CAD2DC"/>
<rect x="217.5" y="248.4" width="12" height="12.85" fill="#6A7E9C"/>
<rect x="217.5" y="261.2" width="12" height="12.85" fill="#4A5A73"/>
<rect x="218" y="306" width="12" height="11" fill="#92D050"/>
<rect x="234.5" y="192.5" width="12" height="11.5" fill="#ED7D31"/>
<rect x="234.5" y="210" width="12" height="12.85" fill="#FBE5D6"/>
<rect x="234.5" y="222.8" width="12" height="12.85" fill="#F8CBAD"/>
<rect x="234.5" y="235.6" width="12" height="12.85" fill="#F4B183"/>
<rect x="234.5" y="248.4" width="12" height="12.85" fill="#C55A11"/>
<rect x="234.5" y="261.2" width="12" height="12.85" fill="#843C0C"/>
<rect x="235" y="306" width="12" height="11" fill="#00B050"/>
<rect x="251.5" y="192.5" width="12" height="11.5" fill="#A5A5A5"/>
<rect x="251.5" y="210" width="12" height="12.85" fill="#EDEDED"/>
<rect x="251.5" y="222.8" width="12" height="12.85" fill="#DBDBDB"/>
<rect x="251.5" y="235.6" width="12" height="12.85" fill="#C9C9C9"/>
<rect x="251.5" y="248.4" width="12" height="12.85" fill="#7B7B7B"/>
<rect x="251.5" y="261.2" width="12" height="12.85" fill="#525252"/>
<rect x="251.0" y="305.5" width="12.5" height="12.5" fill="#00B0F0" stroke="#C8743C" stroke-width="1"/>
<rect x="252.1" y="306.6" width="10.3" height="10.3" fill="none" stroke="#FFC48A" stroke-width="1.2"/>
<rect x="268.5" y="192.5" width="12" height="11.5" fill="#FFC000"/>
<rect x="268.5" y="210" width="12" height="12.85" fill="#FFF2CC"/>
<rect x="268.5" y="222.8" width="12" height="12.85" fill="#FFE699"/>
<rect x="268.5" y="235.6" width="12" height="12.85" fill="#FFD966"/>
<rect x="268.5" y="248.4" width="12" height="12.85" fill="#BF9000"/>
<rect x="268.5" y="261.2" width="12" height="12.85" fill="#7F6000"/>
<rect x="269" y="306" width="12" height="11" fill="#0070C0"/>
<rect x="285.5" y="192.5" width="12" height="11.5" fill="#5B9BD5"/>
<rect x="285.5" y="210" width="12" height="12.85" fill="#DEEBF7"/>
<rect x="285.5" y="222.8" width="12" height="12.85" fill="#BDD7EE"/>
<rect x="285.5" y="235.6" width="12" height="12.85" fill="#9DC3E6"/>
<rect x="285.5" y="248.4" width="12" height="12.85" fill="#2E75B6"/>
<rect x="285.5" y="261.2" width="12" height="12.85" fill="#1F4E79"/>
<rect x="286" y="306" width="12" height="11" fill="#002060"/>
<rect x="302.5" y="192.5" width="12" height="11.5" fill="#70AD47"/>
<rect x="302.5" y="210" width="12" height="12.85" fill="#E2F0D9"/>
<rect x="302.5" y="222.8" width="12" height="12.85" fill="#C5E0B4"/>
<rect x="302.5" y="235.6" width="12" height="12.85" fill="#A9D18E"/>
<rect x="302.5" y="248.4" width="12" height="12.85" fill="#548235"/>
<rect x="302.5" y="261.2" width="12" height="12.85" fill="#385723"/>
<rect x="303" y="306" width="12" height="11" fill="#7030A0"/>
<g>
<path d="M158.5 333.5 L158.5 326 A7.5 7.5 0 0 1 165.6 331 Z" fill="#E8A06A"/>
<path d="M158.5 333.5 L165.6 331 A7.5 7.5 0 0 1 163.8 338.8 Z" fill="#6FA3A8"/>
<path d="M158.5 333.5 L163.8 338.8 A7.5 7.5 0 0 1 153.2 338.8 Z" fill="#3F78C0"/>
<path d="M158.5 333.5 L153.2 338.8 A7.5 7.5 0 0 1 151 333 Z" fill="#C8643C"/>
<path d="M158.5 333.5 L151 333 A7.5 7.5 0 0 1 158.5 326 Z" fill="#D9955A"/>
<path d="M158.5 326 V333.5 L165.6 331 M158.5 333.5 L163.8 338.8 M158.5 333.5 L153.2 338.8 M158.5 333.5 L151 333" stroke="#fff" stroke-width="0.8" fill="none"/>
</g>
<defs><linearGradient id="gr" x1="0" y1="0" x2="1" y2="1"><stop offset="0" stop-color="#F4F4F4"/><stop offset="1" stop-color="#8A8A8A"/></linearGradient></defs>
<rect x="152.5" y="352.5" width="13" height="13" fill="url(#gr)" stroke="#777" stroke-width="1"/>
<path d="M304 355 L307.5 358.5 L304 362 Z" fill="#555"/>
</svg>
<!-- annotations -->
<div class="a" style="left:140px;top:110px;width:47px;height:34px;border:3px solid #EE12EE"></div>
<div class="a" style="left:245px;top:290px;width:27px;height:42px;border:3px solid #EE12EE;background:#FBFBFB"></div>
<svg class="a" style="left:248px;top:300px" width="21" height="22" viewBox="248 300 21 22">
<rect x="251" y="305.5" width="12.5" height="12.5" fill="#00B0F0" stroke="#C8743C" stroke-width="1"/>
<rect x="252.1" y="306.6" width="10.3" height="10.3" fill="none" stroke="#FFC48A" stroke-width="1.2"/>
</svg>
<div class="a" style="left:185.5px;top:127px;width:19px;height:19px;border-radius:50%;background:#EA1CEA"></div>
<svg class="a" style="left:185px;top:127px" width="20" height="20"><path d="M11 4.5 V15.5 M11 4.8 L8.3 7" stroke="#fff" stroke-width="1.5" fill="none"/></svg>
<div class="a" style="left:248px;top:330.5px;width:19.5px;height:19.5px;border-radius:50%;background:#EA1CEA"></div>
<div class="t" style="left:248px;top:333.5px;width:19.5px;text-align:center;font-size:13px;line-height:14px;color:#fff">2</div>
<!-- window border -->
<div class="a" style="left:0;top:66px;width:1px;height:584px;background:#2A4B7C"></div>
<div class="a" style="left:825px;top:66px;width:1px;height:584px;background:#2A4B7C"></div>
<div class="a" style="left:0;top:649px;width:826px;height:1px;background:#2A4B7C"></div>
</body></html>
